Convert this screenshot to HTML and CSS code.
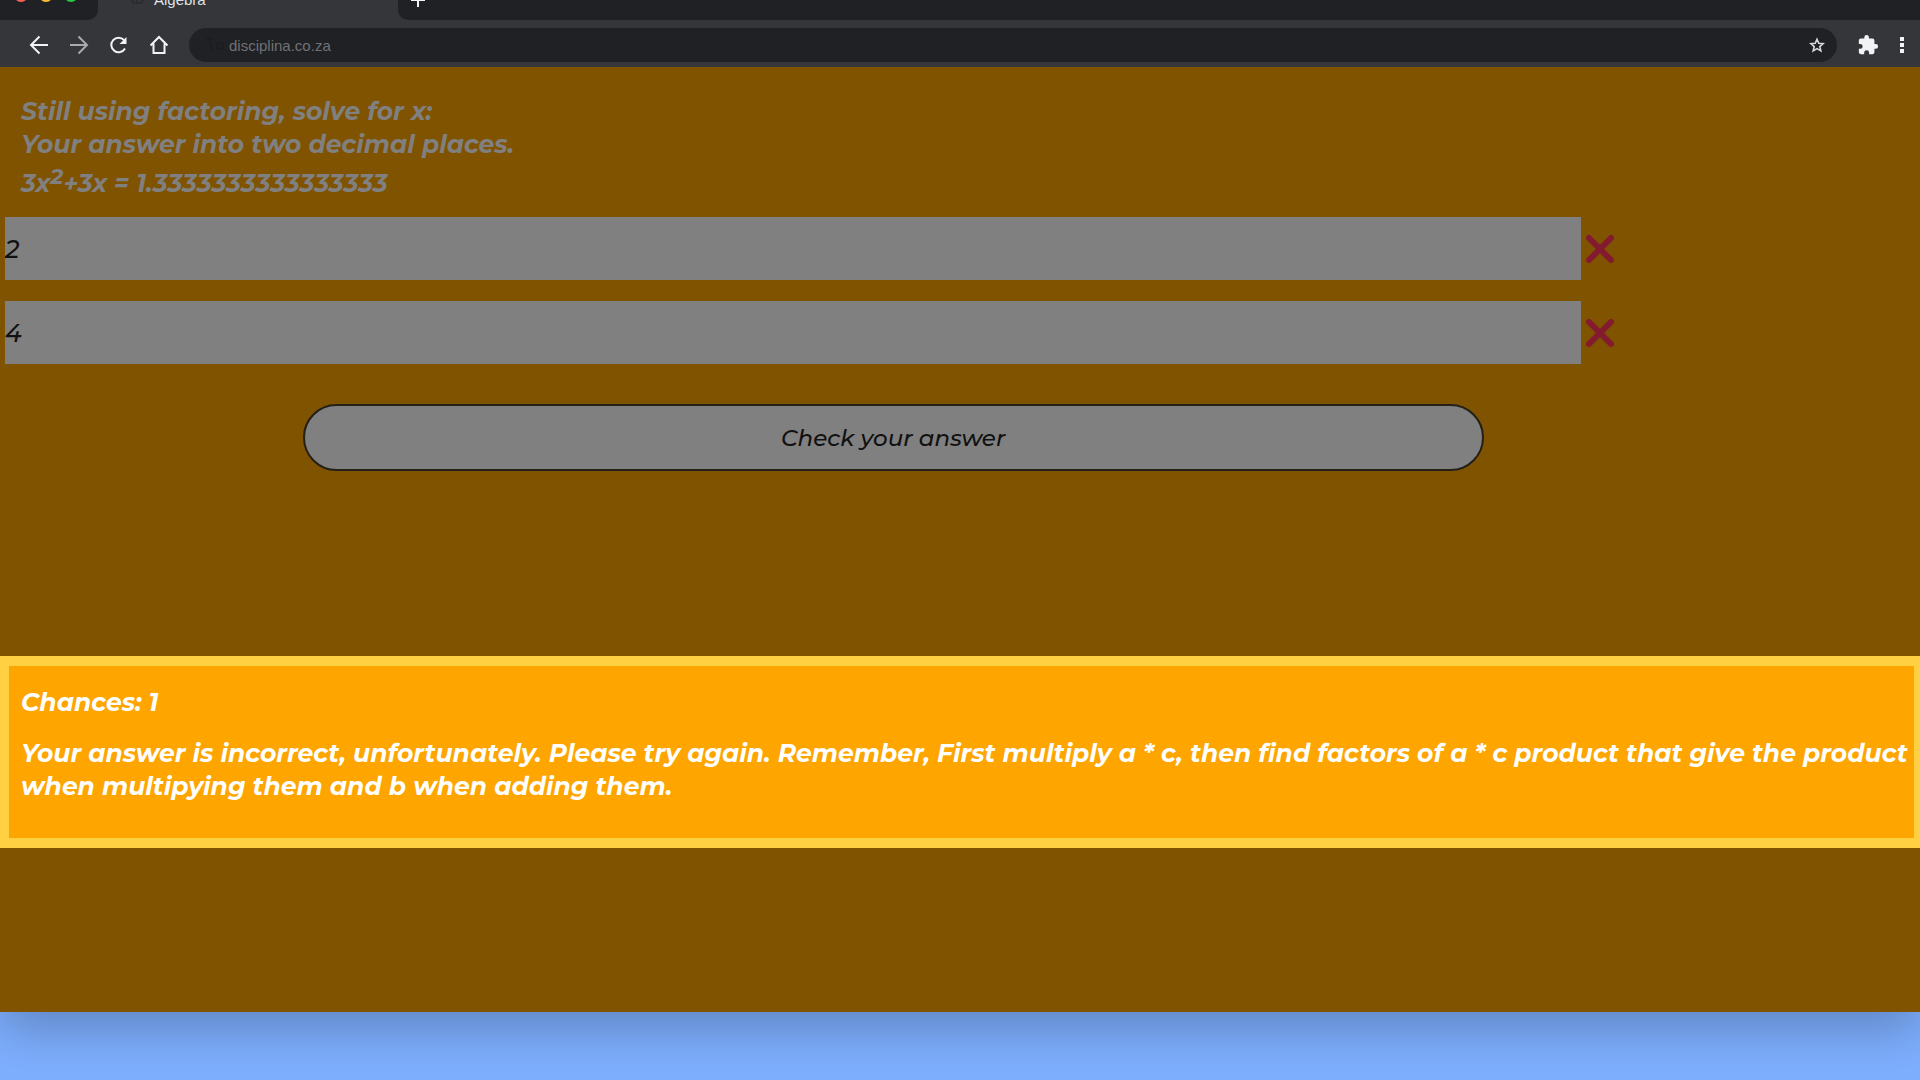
FILE: index.html
```html
<!DOCTYPE html>
<html lang="en">
<head>
<meta charset="utf-8">
<title>Algebra</title>
<link rel="stylesheet" href="styles.css">
</head>
<body>
<div class="window">
  <header class="chrome">
    <div class="tabs">
      <div class="tabs-start">
        <span class="light light-close"></span>
        <span class="light light-min"></span>
        <span class="light light-max"></span>
      </div>
      <div class="tab">
        <svg class="favicon" width="16" height="16" viewBox="0 0 16 16" aria-hidden="true"><path d="M1 3h6M4 3v6l3 3M9 11V6h3a2 2 0 0 1 0 5z"/></svg>
        <span class="tab-title">Algebra</span>
      </div>
      <div class="tabs-end">
        <button class="icon-button" type="button" aria-label="New tab">
          <svg width="16" height="16" viewBox="0 0 16 16"><path d="M8 1v14M1 8h14"/></svg>
        </button>
      </div>
    </div>
    <nav class="toolbar">
      <div class="nav-buttons">
        <button class="icon-button" type="button" aria-label="Back">
          <svg width="20" height="20" viewBox="0 0 20 20"><path d="M19 10H2M10.500 1.500L2 10l8.500 8.500"/></svg>
        </button>
        <button class="icon-button icon-dim" type="button" aria-label="Forward">
          <svg width="20" height="20" viewBox="0 0 20 20"><path d="M1 10h17M9.500 1.500L18 10l-8.500 8.500"/></svg>
        </button>
        <button class="icon-button" type="button" aria-label="Reload">
          <svg width="20" height="20" viewBox="0 0 20 20"><path d="M16 13.500A7.300 7.300 0 1 1 15 5"/><path class="solid" d="M17.500 2v7h-7z"/></svg>
        </button>
        <button class="icon-button" type="button" aria-label="Home">
          <svg width="20" height="20" viewBox="0 0 20 20"><path d="M1.500 10.500L10 2l8.500 8.500M4.500 8.500V18h11V8.500"/></svg>
        </button>
      </div>
      <div class="address">
        <svg class="favicon" width="20" height="20" viewBox="0 0 20 20" aria-hidden="true"><path d="M1 4h8M5 4v7l4 4M12 14V8h3a3 3 0 0 1 0 6z"/></svg>
        <input class="url" type="text" value="disciplina.co.za" aria-label="Address">
        <button class="icon-button icon-star" type="button" aria-label="Bookmark">
          <svg width="16" height="16" viewBox="0 0 20 20"><path d="M10 2.800l2.200 5 5.500.500-4.200 3.600 1.300 5.500-4.800-2.900-4.800 2.900 1.300-5.500L2.300 8.300l5.500-.500z"/></svg>
        </button>
      </div>
      <button class="icon-button" type="button" aria-label="Extensions">
        <svg width="22" height="22" viewBox="0 0 24 24"><path class="fill" d="M20.500 11H19V7a2 2 0 0 0-2-2h-4V3.500a2.500 2.500 0 0 0-5 0V5H4a2 2 0 0 0-2 2v3.800h1.500a2.700 2.700 0 0 1 0 5.400H2V20a2 2 0 0 0 2 2h3.800v-1.500a2.700 2.700 0 0 1 5.400 0V22H17a2 2 0 0 0 2-2v-4h1.500a2.500 2.500 0 0 0 0-5z"/></svg>
      </button>
      <button class="icon-button" type="button" aria-label="Menu">
        <svg width="6" height="18" viewBox="0 0 6 18"><path class="fill" d="M1 1h4v4H1zM1 7h4v4H1zM1 13h4v4H1z"/></svg>
      </button>
    </nav>
  </header>
  <main class="page">
    <form class="quiz">
      <p class="question">Still using factoring, solve for x:<br>Your answer into two decimal places.<br><span class="equation">3x<sup>2</sup>+3x = 1.3333333333333333</span></p>
      <div class="answer">
        <input class="answer-input" type="text" value="2" aria-label="First answer">
        <svg class="cross" width="28" height="28" viewBox="0 0 28 28" role="img" aria-label="Incorrect"><path d="M3 3l22 22M25 3L3 25"/></svg>
      </div>
      <div class="answer">
        <input class="answer-input" type="text" value="4" aria-label="Second answer">
        <svg class="cross" width="28" height="28" viewBox="0 0 28 28" role="img" aria-label="Incorrect"><path d="M3 3l22 22M25 3L3 25"/></svg>
      </div>
      <div class="actions">
        <button class="check" type="button">Check your answer</button>
      </div>
    </form>
    <section class="feedback">
      <p>Chances: 1</p>
      <p>Your answer is incorrect, unfortunately. Please try again. Remember, First multiply a * c, then find factors of a * c product that give the product when multipying them and b when adding them.</p>
    </section>
  </main>
</div>
</body>
</html>
```
FILE: styles.css
```css
* {
  box-sizing: border-box;
}

body {
  margin: 0;
  min-height: 100vh;
  padding-bottom: 68px;
  display: flex;
  flex-direction: column;
  overflow-x: hidden;
  background: #7eafff;
  font-family: Montserrat, Inter, "Open Sans", sans-serif;
}

p {
  margin: 0;
}

svg {
  display: block;
}

.window {
  flex: 1;
  display: flex;
  flex-direction: column;
  box-shadow: 0 16px 50px rgba(0, 0, 0, 0.25);
}

/* Browser chrome */
.chrome {
  background: #35363a;
  font-family: "Liberation Sans", Arial, sans-serif;
}

.tabs {
  display: flex;
  height: 20px;
  overflow: hidden;
}

.tabs-start,
.tabs-end {
  display: flex;
  align-items: flex-end;
  background: #202124;
}

.tabs-start {
  width: 98px;
  gap: 11px;
  padding: 0 14px 18px;
  border-bottom-right-radius: 10px;
}

.tabs-end {
  flex: 1;
  padding: 0 12px 12px;
  border-bottom-left-radius: 10px;
}

.light {
  flex: none;
  width: 14px;
  height: 14px;
  border-radius: 50%;
}

.light-close { background: #ff5f57; }
.light-min { background: #febc2e; }
.light-max { background: #28c840; }

.tab {
  display: flex;
  align-items: flex-end;
  gap: 10px;
  width: 300px;
  padding: 0 30px 12px;
}

.tab-title {
  font-size: 15px;
  line-height: 16px;
  color: #dfe1e5;
}

.favicon {
  flex: none;
  fill: none;
  stroke: #2b2c30;
  stroke-width: 2;
}

.address .favicon {
  stroke: #1c1d20;
}

.icon-button {
  flex: none;
  padding: 0;
  border: 0;
  background: none;
  color: #f1f3f4;
}

.icon-button svg {
  fill: none;
  stroke: currentColor;
  stroke-width: 2;
}

.icon-button .solid,
.icon-button .fill {
  fill: currentColor;
  stroke: none;
}

.icon-dim {
  color: #a9aaad;
}

.icon-star {
  color: #d5d7da;
}

.toolbar {
  display: flex;
  align-items: center;
  gap: 20px;
  height: 47px;
  padding: 3px 15px 0 29px;
}

.nav-buttons {
  display: flex;
  gap: 20px;
}

.address {
  flex: 1;
  display: flex;
  align-items: center;
  gap: 4px;
  height: 34px;
  padding: 0 12px 0 16px;
  border-radius: 17px;
  background: #202124;
}

.url {
  flex: 1;
  min-width: 0;
  padding: 0;
  border: 0;
  background: none;
  color: #707175;
  font: 15px "Liberation Sans", Arial, sans-serif;
}

/* Exercise page */
.page {
  flex: 1;
  background: #805300;
  font-size: 25px;
  font-style: italic;
  font-weight: 700;
  line-height: 33px;
}

.quiz {
  min-height: 589px;
  padding: 28px 5px;
}

.question {
  padding: 0 16px 17px;
  color: #808080;
}

.equation {
  display: block;
  padding-top: 6px;
}

.question sup {
  font-size: 22px;
  line-height: 0;
  vertical-align: 8px;
}

.answer {
  display: flex;
  align-items: center;
  gap: 5px;
  margin-bottom: 21px;
}

.answer-input {
  width: 82.500%;
  height: 63px;
  padding: 0;
  border: 0;
  background: #808080;
  color: #111;
  font: italic 500 25px Montserrat, Inter, sans-serif;
}

.cross {
  flex: none;
  fill: none;
  stroke: #841a30;
  stroke-width: 6;
  stroke-linecap: round;
}

.actions {
  width: 93%;
  padding-top: 19px;
}

.check {
  display: block;
  width: 66.500%;
  height: 67px;
  margin: 0 auto;
  border: 2px solid #242018;
  border-radius: 34px;
  background: #808080;
  color: #111;
  font: italic 500 23px Montserrat, Inter, sans-serif;
}

.feedback {
  display: flex;
  flex-direction: column;
  gap: 18px;
  min-height: 192px;
  padding: 20px 4px 24px 12px;
  border: solid #ffd042;
  border-width: 10px 6px 10px 9px;
  background: #ffa500;
  color: #fff;
}
```
